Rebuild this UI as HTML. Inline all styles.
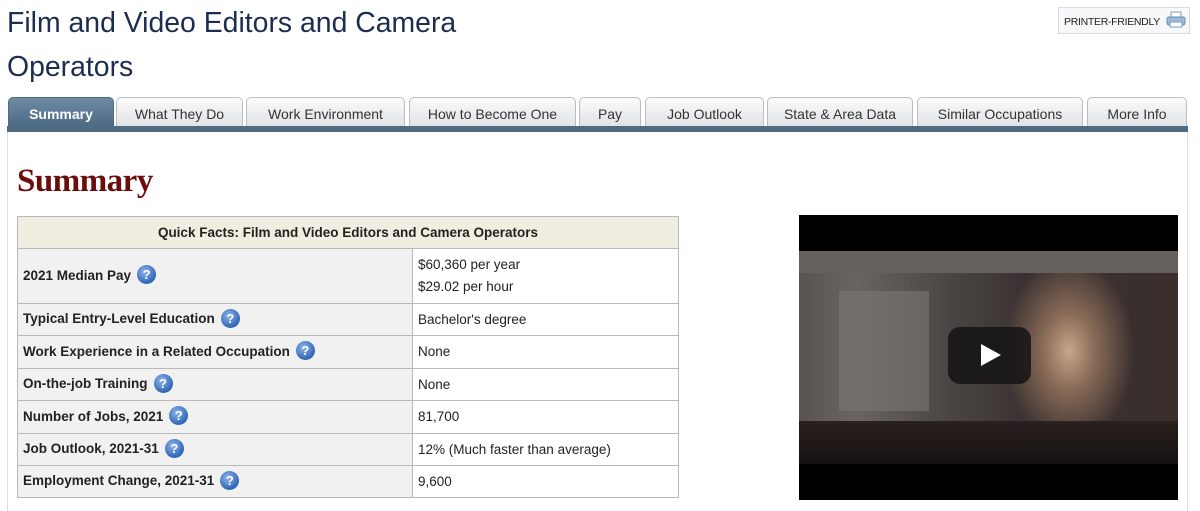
<!DOCTYPE html>
<html><head><meta charset="utf-8"><style>
*{box-sizing:border-box;margin:0;padding:0}
body{width:1200px;height:511px;overflow:hidden;background:#fff;font-family:"Liberation Sans",sans-serif;position:relative}
h1{position:absolute;left:7px;top:1px;font-weight:normal;font-size:28.4px;line-height:44px;color:#1c2d50;width:480px}
.pf{position:absolute;left:1058px;top:7px;width:132px;height:27px;border:1px solid #d8dde3;background:#f6f8fa;font-size:10.5px;letter-spacing:-0.3px;color:#222;padding:8px 0 0 5px;white-space:nowrap}
.pf svg{position:absolute;right:3px;top:3px}
.tabs{position:absolute;top:97px;left:0;width:1200px;height:35px}
.tab{position:absolute;top:0;height:30px;border:1px solid #b9bec4;border-bottom:none;border-radius:5px 5px 0 0;background:linear-gradient(#fbfbfb,#e0e1e3);font-size:14px;color:#333;text-align:center;line-height:33px}
.tab.on{background:linear-gradient(#6e8aa3,#4d6a85);color:#fff;font-weight:bold;border-color:#4d6a85}
.bar{position:absolute;top:126px;left:7px;width:1181px;height:6px;background:#4f6b84}
.frame{position:absolute;top:132px;left:7px;width:1181px;height:379px;border-left:1px solid #ddd;border-right:1px solid #ddd}
h2{position:absolute;left:17px;top:163px;font-family:"Liberation Serif",serif;font-size:33px;color:#6b0d0d;font-weight:bold;letter-spacing:-0.5px}
table{position:absolute;left:17px;top:216px;width:662px;border-collapse:collapse;font-size:13.5px;color:#222}
td,th{border:1px solid #b9b9b9;vertical-align:middle}
th{background:#efeee0;height:32px;font-size:13.5px;font-weight:bold}
td.l{background:#f1f1f1;font-weight:bold;padding-left:5px;width:395px}
td.r{padding-left:5px;line-height:22px}
.q{display:inline-block;width:19px;height:19px;border-radius:50%;background:radial-gradient(circle at 40% 35%,#8fb5ea,#2f65b8 70%);color:#fff;font-size:13px;text-align:center;line-height:19px;font-weight:bold;vertical-align:middle;margin-left:6px;margin-top:-3px}
.vid{position:absolute;left:799px;top:215px;width:379px;height:285px;background:#000;overflow:hidden}
.img{position:absolute;left:0;top:36px;width:379px;height:213px;background:
radial-gradient(ellipse 65px 95px at 270px 100px,#c7a68b 0%,#8a6b57 40%,rgba(60,45,40,0) 100%),
linear-gradient(90deg,#58534f 0%,#6a6560 15%,#4a4542 40%,#3a3232 60%,#3a2e2e 100%)}
.img .b1{position:absolute;left:0;top:0;width:379px;height:22px;background:#66615d}
.img .sh{position:absolute;left:40px;top:40px;width:90px;height:120px;background:#7b7774;opacity:.6}
.img .bk{position:absolute;left:0;top:170px;width:379px;height:43px;background:linear-gradient(#2a2220,#161111)}
.play{position:absolute;left:149px;top:112px;width:83px;height:57px;border-radius:12px;background:rgba(20,20,20,.85)}
.play:after{content:"";position:absolute;left:33px;top:17px;border-left:20px solid #fff;border-top:11px solid transparent;border-bottom:11px solid transparent}
</style></head><body>
<h1>Film and Video Editors and Camera Operators</h1>
<div class="pf">PRINTER-FRIENDLY<svg width="20" height="18" viewBox="0 0 20 18"><rect x="5" y="1" width="10" height="6" fill="#fff" stroke="#7a9bbf"/><rect x="1" y="6" width="18" height="8" rx="2" fill="#9fbad8" stroke="#6a8db3"/><rect x="4" y="11" width="12" height="5" fill="#fff" stroke="#7a9bbf"/></svg></div>
<div class="tabs">
<div class="tab on" style="left:8px;width:106px">Summary</div>
<div class="tab" style="left:116px;width:127px">What They Do</div>
<div class="tab" style="left:246px;width:159px">Work Environment</div>
<div class="tab" style="left:409px;width:167px">How to Become One</div>
<div class="tab" style="left:579px;width:62px">Pay</div>
<div class="tab" style="left:645px;width:119px">Job Outlook</div>
<div class="tab" style="left:767px;width:146px">State &amp; Area Data</div>
<div class="tab" style="left:917px;width:166px">Similar Occupations</div>
<div class="tab" style="left:1087px;width:100px">More Info</div>
</div>
<div class="bar"></div>
<div class="frame"></div>
<h2>Summary</h2>
<table>
<tr><th colspan="2">Quick Facts: Film and Video Editors and Camera Operators</th></tr>
<tr style="height:55px"><td class="l">2021 Median Pay<span class="q">?</span></td><td class="r">$60,360 per year<br>$29.02 per hour</td></tr>
<tr style="height:32px"><td class="l">Typical Entry-Level Education<span class="q">?</span></td><td class="r">Bachelor's degree</td></tr>
<tr style="height:33px"><td class="l">Work Experience in a Related Occupation<span class="q">?</span></td><td class="r">None</td></tr>
<tr style="height:32px"><td class="l">On-the-job Training<span class="q">?</span></td><td class="r">None</td></tr>
<tr style="height:33px"><td class="l">Number of Jobs, 2021<span class="q">?</span></td><td class="r">81,700</td></tr>
<tr style="height:32px"><td class="l">Job Outlook, 2021-31<span class="q">?</span></td><td class="r">12% (Much faster than average)</td></tr>
<tr style="height:32px"><td class="l">Employment Change, 2021-31<span class="q">?</span></td><td class="r">9,600</td></tr>
</table>
<div class="vid"><div class="img"><div class="b1"></div><div class="sh"></div><div class="bk"></div></div><div class="play"></div></div>
</body></html>
